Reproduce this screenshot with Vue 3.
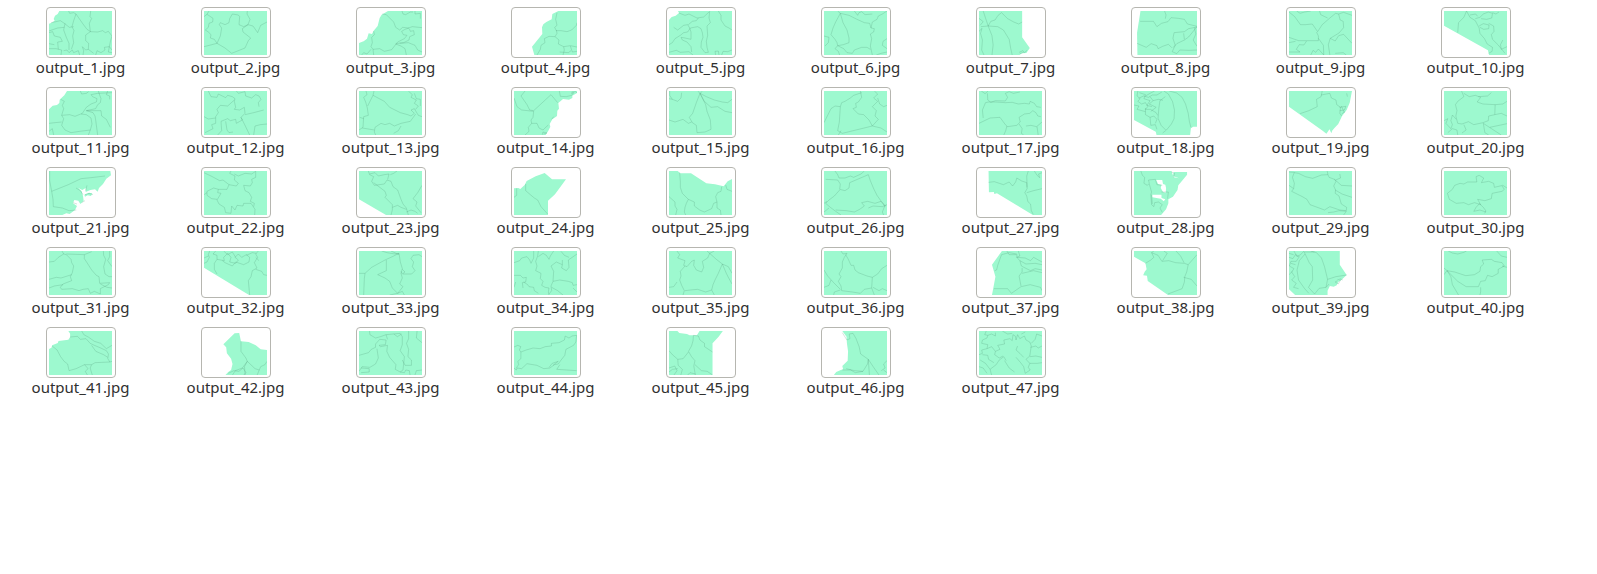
<script setup>
// Each sheet: [origin x, origin y, width, land outline ('' = the whole sheet), borders]
const sheets = [
  [144, 33, 189, 'M175 33L170 42 162 47 158 57 161 62 152 68 144 71V165H333V33Z', 'M203 33L206 40 218 38 225 42 246 72 258 88 269 95M225 42L218 62 213 80 219 92 215 108 218 128 211 148M269 33L267 50 272 55 265 70 268 95 254 105 254 122 263 130 262 148 278 160M268 95L290 96 305 92 313 98 322 94 333 108 328 125 325 140M150 68L165 65 178 62 190 70 205 82 218 80M192 70L188 90 196 112 204 130 204 150M144 93L158 88 170 84 190 82M144 98L155 95 160 108 178 112 184 124 170 126 172 148M144 131L160 134M144 146L165 146 182 150 180 165M188 152L198 150 204 158 214 150 218 158 232 152 236 165M246 165L248 152 244 140 254 150 262 148M284 165L288 152 300 158 312 150 310 142 325 140 333 150M325 140L322 156 333 158'],
  [609, 33, 189, '', 'M624 33L618 43 609 50M618 43L636 55 635 66 624 70 622 82 613 90 622 96 630 104 628 114 640 118 648 130 609 140M648 130L658 108 662 84 655 74 658 68 672 74 684 68 686 56 694 42 712 45 716 50 714 74 728 80 741 74M739 33L738 42 747 58 741 74 756 78 770 98 779 76 798 66M741 74L724 86 726 96 749 114 742 122 732 144 692 160 672 144 648 130'],
  [1074, 33, 189, 'M1161 33L1142 44 1136 54 1130 78 1118 92 1113 102 1103 100 1098 116 1088 124 1074 129V165H1263V33Z', 'M1144 42L1156 44 1178 66 1184 82 1196 90 1205 82 1222 84 1234 80 1263 83M1203 33L1206 42 1214 44 1228 36 1236 36M1242 33L1242 42 1258 40 1258 56M1118 93L1120 104 1112 112 1114 128 1110 140 1116 148 1136 146 1150 154 1172 149 1190 126 1210 116 1218 106 1207 104 1202 94 1212 88 1224 84M1225 86L1228 94 1238 92 1240 104 1226 110 1224 120 1208 128 1196 129 1184 132 1200 138 1212 146 1216 165M1196 130L1222 128 1242 136 1250 150 1263 156M1082 165L1088 158 1098 162 1110 148M1116 148L1118 165'],
  [99, 33, 189, 'M232 33L214 42 212 58 196 66 187 73 183 82 184 102 153 140 160 165H288V33Z', 'M228 38L224 58 228 76 221 82 226 92 240 92 258 95 272 90 286 76 288 68M226 90L228 100 222 110 204 109 190 116 192 128 180 136 178 148 168 165M222 110L234 120 232 132 248 140 268 137 288 141M248 140L250 150 246 165M268 138L274 156 288 154M236 156L262 158 270 152'],
  [564, 33, 189, 'M591 33L594 39 584 47 572 51 564 60V165H753V33Z', 'M594 39L612 46 624 42 648 54 668 51 684 36M712 33L720 46 720 60 732 78 744 84 753 90M686 33L684 54 688 68 678 78 680 106 676 124 678 142 682 157 672 158 660 142 661 126 666 112 664 98 660 86 650 80 628 84 620 96 608 98 598 106 582 116 574 128 564 134M578 82L590 90 608 76 620 74 626 84 630 96 630 118 612 114 600 112 604 120 618 126 630 140 632 156M622 74L634 64 646 62 652 54M564 157L586 151 598 157 624 155 636 165M704 165L702 154 712 153 714 165M722 165L726 154 740 155 753 150'],
  [1029, 33, 189, '', 'M1070 33L1078 40 1104 46 1128 58 1150 68 1166 70 1170 84M1078 40L1064 66 1056 84 1050 104 1062 118 1068 128 1070 137 1087 134 1104 128 1104 114 1098 90 1086 68 1078 40M1218 33L1204 42 1192 48 1188 58 1174 66 1170 84 1180 86 1178 96 1168 102 1172 116 1168 138 1174 165M1120 33L1130 46 1134 38 1142 35 1152 44 1174 42M1029 108L1044 112 1042 128 1032 138M1070 137L1062 146 1072 154 1076 165M1070 137L1088 146 1098 158 1114 160 1120 150 1142 142 1158 142 1168 148M1218 116L1206 124 1204 136 1218 146M1186 165L1200 160 1218 156'],
  [73, 33, 165, 'M73 33H186V112L206 144 197 159 186 160 179 165H73Z', 'M84 33L97 78 107 107 110 135 107 165M97 78L104 64 115 60 123 46 132 38 148 56 164 66 177 72 186 66M78 80L97 78 122 80 137 90 152 118 156 145 160 165M73 94L81 85 77 100 82 120 80 150 86 165M178 157L188 152 192 158 199 151M180 161L190 157M73 55L84 65 76 76'],
  [478, 33, 165, 'M495 33H643V165H487L486 98Z', 'M494 64H529L538 80 550 70 567 65 575 53 594 55 610 58 618 72 643 79M558 33L562 45 560 56M486 130L510 142 523 131 538 137 541 146 553 139 568 133 577 143M643 81L621 86 610 95 583 98 580 115 586 136 578 155 590 161 598 150 621 151 643 150M643 80L621 111 610 120 590 131 580 143M608 100L610 118M636 83L640 102 633 120 643 139'],
  [883, 33, 165, '', 'M883 36L898 50 913 74 926 74 944 72 958 95 970 74 990 54 1005 40 1013 42 1017 60 1025 64 1026 83 1014 99 991 115 1004 123 1013 107 1026 103 1048 130M903 33L912 40 924 36 940 33M883 112L908 122 960 122 960 108 955 96M963 33L966 44 984 54M883 128L900 124M929 123L922 135 910 134 902 148 912 156 883 156M960 115L973 136 974 165M991 115L986 134 990 165M940 165L946 151 953 157 960 147 974 165M1004 160L1025 158 1033 165M1013 42L1026 37 1048 46'],
  [1288, 33, 165, 'M1288 33H1453V165H1406L1403 151 1288 77Z', 'M1347 33L1340 52 1326 68 1324 98M1347 33L1356 52 1370 62 1380 84 1382 100 1394 116 1401 132 1415 142 1414 154 1405 160M1370 56L1382 52 1391 42 1404 36 1415 40 1413 54 1400 58 1385 56M1356 45L1371 42 1376 49M1380 78L1391 71 1406 75 1405 86 1392 88 1382 82M1405 70L1418 78 1419 94 1412 104 1415 118 1430 135 1448 160M1442 120L1436 134 1438 148 1453 140M1415 38L1424 42 1432 36'],
  [144, 273, 189, 'M198 273L190 286 182 293 176 299 175 309 168 315 155 317 144 328V405H333V273Z', 'M179 298L190 304 184 316 188 326 182 346 206 344 222 349 244 340 256 322 270 312 286 306 288 296 275 290 270 284 290 280 333 278M238 273L242 282 256 280 263 275M292 273L296 285 300 296 298 308 290 314 284 326 256 332 276 338 282 348 284 360 290 405M256 332L300 332 302 348 316 358 328 382M182 346L188 356 182 376 192 390 210 398 236 394 268 390 273 372 270 354 256 344 240 342M144 370L162 368 182 366M144 394L154 386 158 405M268 390L262 405M320 273L316 284 326 288 326 298'],
  [609, 273, 189, '', 'M622 273L630 290 648 292 652 282 674 293 680 286 694 290 702 296 700 304 704 322 700 328M700 300L680 318 658 316 648 328 652 338 644 350 644 370 632 374 636 386 612 398M609 350L622 357 644 354M706 273L712 280 732 275 734 288 752 294 764 284 774 288 780 298 772 308 774 320M700 328L716 330 730 322 732 340 720 352 724 360 706 370 704 358 688 362 680 356 660 364 662 392 650 405M720 352L732 376 746 405M732 344L758 338 788 330M758 405L762 378 778 374 798 372M674 364L678 390 684 398 696 396'],
  [1074, 273, 189, '', 'M1095 273L1098 284 1088 292 1094 306 1099 324 1102 346 1088 350 1086 382 1074 390M1119 273L1116 286 1150 304 1166 322 1198 338 1220 344 1230 348 1240 340 1230 330 1240 326 1252 346 1263 350M1116 286L1100 318M1084 384L1120 390M1088 356L1076 352M1222 273L1234 284 1230 292 1246 300 1240 310 1252 318 1244 328M1240 280L1246 296 1258 298 1258 318M1244 342L1228 364 1200 370 1180 378 1166 370 1152 374 1140 370 1122 382 1120 396 1124 405M1200 378L1192 392 1178 400'],
  [99, 273, 189, 'M99 273H288V279L274 287 274 294 264 299 246 297 232 309 234 326 229 332 228 348 214 358 206 372 208 380 202 392 194 405H99Z', 'M132 273L120 288 138 314 146 330 158 332 210 284 230 308M235 273L238 289 256 290 272 286 278 278 270 280M272 276L284 275 288 279M99 294L108 320 122 330 158 334 156 352 150 360 152 370 142 382 144 394 132 405M152 370L168 370 174 384 186 390 194 382 202 375M184 404L186 396 198 399 188 402M212 358L218 350'],
  [564, 273, 189, '', 'M566 273L566 286 574 298 590 304 600 294 602 278M564 296L574 298M657 280L646 308 635 340 625 352 634 368 646 376 648 398 672 396 690 388 688 360 678 334 674 314 657 280 670 304 690 322 710 320 732 334 753 338M657 280L676 290 700 300 724 306 740 308 753 298M657 280L650 273M657 280L664 274M564 360L582 366 606 358 622 370 632 366'],
  [1029, 273, 189, '', 'M1029 368L1038 350 1050 326 1062 318 1078 320 1082 308 1092 304 1108 294 1118 286 1142 278M1138 273L1142 292 1132 306 1124 310 1126 322 1116 326 1132 342 1148 344 1164 360 1174 378 1192 358 1182 348 1186 332 1174 320 1190 304 1178 294 1190 282 1180 273M1078 320L1075 366 1070 392 1084 400 1174 378 1200 384 1218 396M1190 294L1196 312 1208 320 1218 316M1080 392L1072 405'],
  [73, 273, 165, '', 'M79 273L89 281 97 273M95 280L96 300 104 307 116 302 142 303 148 292 142 280 152 275 163 280 180 276M90 308L98 306 116 306 142 308 160 307 176 312 192 310 205 312 207 304 218 310 224 320 235 322M90 308L82 330 84 354M73 370L102 354 128 352 142 374 148 380 172 376 181 366 178 352 192 342 206 340 214 332 222 338 227 348 235 350M146 378L143 392 138 405M178 372L186 386 184 400 190 405M196 378L209 376 224 380 238 366M225 380L228 405'],
  [478, 273, 165, 'M478 273H643V380H633L627 385 625 405H537L535 395 478 360Z', 'M488 273L486 288 494 296 488 304 498 312 508 308 514 320 508 328 521 328 536 338 540 346M490 295L503 288 516 292 526 285 538 285 551 276M492 278L508 284 504 296 520 302 512 316 525 320M508 288L520 280 532 273M520 290L528 302 542 298 554 301M528 302L518 312 536 322 522 334M556 273L568 282 579 305 584 330 583 356 576 372 563 390 553 399M560 290L546 302 543 325 541 355 549 376 561 390M570 273L590 279 604 292 613 312 620 340 623 364 627 382M508 324L508 344 520 352 522 376 534 374 538 388M520 352L530 348 538 358 534 370M478 315L491 318 486 328 508 335'],
  [883, 273, 165, 'M883 273H1048L1042 308 1034 330 1022 348 1012 372 1002 384 996 392 994 400 989 388 981 401 971 392 883 320Z', 'M912 341L935 332 957 320 955 298 967 290 970 273M967 285L990 280 994 294 1006 300 1008 314 1018 322 1016 340 1021 348M1015 322L1032 319 1028 330 1016 332M1020 318L1028 338M1034 280L1036 290M1021 342L1029 335'],
  [1288, 273, 165, '', 'M1334 273L1340 290 1324 304 1318 314 1322 332 1319 348 1324 370 1335 372 1352 365 1366 374 1390 368 1404 362 1405 348 1421 344 1422 314 1390 312 1375 306 1384 292 1370 286 1354 290 1340 280M1378 290L1402 288 1412 278M1422 314L1442 312 1453 304M1421 344L1438 340 1453 348M1288 362L1298 356 1293 370 1306 386 1310 374 1306 362 1310 345 1320 358M1391 370L1415 388 1438 405M1391 370L1395 398 1405 405M1340 374L1346 390 1335 399M1408 382L1453 371M1298 398L1310 386 1322 390 1324 405'],

  [144, 33, 189, 'M144 33H328L330 46 316 56 306 72 294 84 290 95 282 88 268 90 254 96 254 84 244 90 232 84 242 94 246 108 248 122 238 132 232 122 220 120 216 130 228 138 222 150 206 162 196 160 184 165H144ZM250 104L264 98 274 100 270 108 260 106 252 110Z', 'M146 33L146 62 152 94 156 118 157 140 184 144 204 152 226 150M152 94L172 86 202 74 240 56 270 53 312 48M225 84L238 92 246 104M254 92L258 76M216 128L228 132M242 128L252 122M252 104L264 100 276 104'],
  [609, 33, 189, '', 'M609 38L634 50 656 62 666 60 684 74 706 78 712 70 700 60 702 48 686 40 690 33M700 42L712 48 732 40 752 42 764 34 764 52 752 58 754 68 748 78 728 76 732 92 744 98 752 112 748 124 760 130 758 140M684 74L678 88 652 88 650 98 660 100 648 120 654 132 670 142 674 158 690 160 692 138 702 150 708 136 726 138 728 130 750 130 762 148 761 165M652 88L638 84 618 94 618 106 632 116 648 118M609 104L618 98'],
  [1074, 33, 189, 'M1074 33H1263V165H1155L1074 118Z', 'M1102 33L1106 44 1118 50 1112 64 1120 76 1150 72 1158 60 1170 64 1176 80 1190 90 1200 118 1206 132 1216 144 1222 165M1106 42L1122 38 1132 48 1150 44 1164 42 1160 58M1118 68L1152 94 1156 106 1152 112 1174 134 1174 150 1170 165M1174 142L1190 136 1200 142 1216 148M1216 156L1230 150 1242 154 1250 160M1263 76L1250 98 1236 116 1248 126 1244 138 1260 158M1168 44L1178 40 1188 33'],
  [99, 33, 189, 'M99 85L112 84 118 87 131 75 137 63 164 49 191 39 213 58H255L222 103 201 122V165H99Z', 'M134 72L134 92 148 104 160 114 170 120 180 140 200 162M107 85L107 106 99 112'],
  [564, 33, 189, 'M564 33H590L598 40H630L676 70 702 73 728 79 740 64 753 57V165H564Z', 'M596 38L598 64 598 82 604 100 622 118 616 130 612 142 610 156 614 165M564 110L582 126 582 138 588 148 584 165M622 118L640 126 640 138 656 150 670 156 692 146 698 130 708 126 704 110 710 98 720 94 722 80M734 75L738 88 753 94M708 126L708 144 718 150 720 165'],
  [1029, 33, 189, '', 'M1062 33L1070 44 1074 54 1092 54 1108 48 1118 52 1140 42 1150 33M1034 58L1070 60 1078 72 1076 88 1092 92 1104 84 1106 68 1162 44 1168 62 1178 86 1188 106 1212 140M1076 90L1060 108 1044 120 1034 130 1048 142 1064 154 1080 165M1029 130L1038 124M1064 150L1096 152 1120 156 1136 148 1150 138 1142 128 1160 124 1182 130 1200 124 1214 138M1162 144L1176 138 1204 140 1218 134M1212 136L1204 156 1208 165M1029 156L1044 144'],
  [73, 33, 165, 'M98 33H238V165H214L120 100 113 102 112 96 99 97Z', 'M98 67L113 65 137 74 152 66 161 78 169 66 172 54 185 63 198 68 199 86 193 98 198 108 201 125 208 132 210 152 215 163M202 33L198 48 199 82M198 98L216 92 238 86M218 33L225 46 232 53 229 42 238 38'],
  [478, 33, 165, 'M478 33H576L578 40 582 52 596 55 580 48 582 36H617V44L604 62 594 76 592 90 580 110 568 118 568 130 562 148 549 165H478ZM536 60L541 72 550 74 548 84 554 96 561 98 562 84 560 74 554 72 552 60ZM526 104H550V114L560 118 556 124 548 116 526 112Z', 'M496 33L500 46 506 52 504 70 513 76 518 70 516 60 534 58 538 74 552 76M518 72L524 96 522 104 524 134 530 140 532 128 542 126 552 134 546 144 552 157M550 96L568 96 566 116M576 36L584 40 582 52M524 104L526 132'],
  [883, 33, 165, '', 'M883 36L897 37 892 52 897 70 895 86 890 94 918 110 930 118 938 134 962 144 976 150 990 140 1016 150 1033 152 1034 142 1020 132 1014 108 1004 100 1005 90 1000 78 1006 64 1002 58 988 52 985 44 968 45 945 55 926 50 908 40 897 38M895 86L883 76M1005 60L1018 54 1016 42M1002 58L1008 64 1020 76 1048 78M1004 90L1022 102 1048 112M985 44L983 33M985 158L1000 156 1014 152 1033 154 1026 165'],
  [1288, 33, 165, '', 'M1297 100L1310 88 1316 76 1330 70 1340 72 1350 66 1374 66 1372 50 1380 46 1392 54 1386 68 1405 64 1418 70 1420 82 1442 76 1453 84M1297 100L1302 118 1320 130 1340 128 1352 134 1368 128 1384 134 1376 118 1395 122 1412 116 1414 100 1440 94 1446 88 1440 78M1380 132L1372 142 1366 154 1382 150 1398 156M1380 130L1391 142 1398 153 1394 160'],
  [144, 273, 189, '', 'M183 273L188 282 196 284 210 298 212 308 218 318 214 338 208 350 212 362 186 372 178 382 182 388 214 386 234 392 246 388 262 386 268 400 280 394 298 402 298 386 322 374 326 368 296 370 294 350 286 346 272 330 258 308 250 296 250 284 196 282M250 284L272 275M188 282L172 292 160 304 144 306M212 344L180 354 166 352 144 358M186 374L160 378 144 384M307 273L308 286 314 298 308 320 312 342 324 350 333 350M326 273L326 290 320 302 333 320M298 372L318 382 333 384'],
  [609, 273, 189, 'M609 273H798V405H744L609 323Z', 'M626 273L622 284 625 292 618 306 609 310M644 273L636 282 648 286 648 298 640 310 640 328 648 342M648 298L670 302 668 292 680 280 690 292 686 306 704 310 712 300 702 292 712 282 722 292 736 284 746 292 744 306 728 314 704 306 694 318 672 308 664 302M668 273L680 284 694 276 704 292M772 273L764 282 770 292 760 308 768 324 754 332 750 350 742 362 746 405M736 286L754 278 766 280M764 328L782 334 788 344 798 346M764 292L774 302M609 294L622 288'],
  [1074, 273, 189, '', 'M1142 273L1158 278 1182 282 1194 280 1174 290 1152 300 1112 322 1092 340 1090 356 1088 405M1074 340L1092 340M1194 280L1198 306 1204 326 1200 340 1204 354 1196 372 1206 380 1190 400 1174 384 1166 364 1152 354 1130 344 1156 332 1156 300M1170 273L1194 284M1204 328L1212 336 1204 342 1200 334M1206 342L1232 342 1242 332 1234 320 1238 306 1230 296 1236 286 1254 284 1263 290M1190 400L1166 405M1190 400L1204 394 1210 405'],
  [99, 273, 189, '', 'M158 273L158 294 150 310 146 300 138 290 122 294 116 302 99 308M172 273L170 288 164 304 168 318 164 332 180 340 178 356 186 364 182 376 192 382 204 384 202 396 204 405M172 290L186 280 196 286 204 298 208 288M218 273L208 288M244 300L244 314 226 306 218 312 210 318 218 334 216 364 210 378 212 392 204 402M244 314L242 324 256 332 264 322 262 300 288 282M216 364L236 360 262 364 274 368 276 376 288 374M99 346L118 346 126 354 136 352 134 366 124 368 126 384M128 366L140 374 144 380 158 382 160 392 172 400M212 382L230 392 246 405M288 396L276 384M99 382L104 366M264 292L250 286 240 274'],
  [564, 273, 189, '', 'M588 273L596 284 590 294 612 302 608 316 618 320 632 304 640 300 638 316 646 330 662 336 668 322 664 304 680 294 686 280 706 298 724 312 742 320 753 340M686 280L678 273M686 280L700 273M612 318L598 334 600 348 596 360 602 376 610 392 606 405M724 312L712 340 702 360 696 374 692 390 674 396 650 388 628 390 612 392M724 312L736 340 742 352 753 372M692 390L700 405M564 382L578 380 588 366'],
  [1029, 273, 189, '', 'M1080 273L1086 282 1098 280 1090 292 1084 306 1084 324 1074 342 1080 350 1072 364 1080 378 1082 392 1114 396 1138 400 1150 388 1172 384 1174 352 1158 348 1132 338 1122 330 1118 316 1110 316 1102 298 1094 284M1174 352L1190 342 1202 326 1218 316M1029 330L1040 348 1058 368 1078 388M1029 382L1044 376 1050 360M1078 390L1060 396 1058 405M1172 384L1180 405M1176 382L1194 392 1204 386 1218 392'],
  [73, 273, 165, 'M133 273H238V405H107L116 350 107 314Z', 'M122 316L119 330 114 332M122 316L132 284 152 278 172 282 172 292 180 302 184 318 194 324 208 332 220 326 238 330M146 273L152 284 170 284M176 273L180 288 172 292 194 294 208 302 216 292 238 306M180 302L196 312 220 310 238 314M186 324L186 336 178 348 183 378M186 340L216 332 238 338M112 386H148L158 400 183 380 207 374 234 382 238 392'],
  [478, 273, 165, 'M478 273H643V405H567L514 363 512 347 502 346 506 335 511 328 508 310 478 290Z', 'M508 310L522 300 530 292 524 278 530 273M524 278L541 286 551 304 569 302 587 308 610 310 620 314 643 284M556 273L565 280 553 302M588 273L600 288 609 308M620 314L616 336 611 350 610 366 604 386 567 402M608 352L628 358 643 378'],
  [883, 273, 165, 'M883 273H1016V314L1034 345 1020 360 1012 366 1008 376 1000 380 990 378 984 392 984 405H899L883 388Z', 'M896 273L904 290 913 284 922 274 936 308 944 320 945 360 934 382 950 402M925 282L910 302 904 330 908 360 924 386 935 400M940 273L955 278 968 294 976 320 984 358 980 382 962 385 950 402M924 276L950 276M883 292L893 296 900 284 910 290 902 304 888 304 884 318 896 326 890 336 898 350 890 360 902 370 895 382 908 386M883 344L892 334M984 358L1006 350 1034 345M980 382L988 372M1010 358L1018 360 1012 372 1004 366 1010 362M1016 356L1024 360M883 280L895 284M888 310L900 314'],
  [1288, 273, 165, '', 'M1299 273L1310 279 1324 282 1340 277 1347 273M1426 273L1438 288 1453 292M1296 332L1316 336 1345 347 1368 344 1382 334 1384 320 1392 312 1388 300 1412 298 1420 304 1440 308 1446 318 1430 328 1430 340 1414 350 1402 346 1396 362 1384 364 1378 380 1346 380 1324 364 1296 332 1306 350 1310 374 1326 405M1288 344L1296 332 1288 324M1384 382L1384 396 1382 405M1440 318L1453 322'],

  [137, 33, 179, 'M192 33H316V165H137V87L144 83 146 76 162 69 164 63 192 59 197 51 197 41Z', 'M197 51L218 49 226 58 242 56 254 70 266 76 284 84 300 92 306 102 304 116 310 126 268 128 258 134 238 134 214 146 194 152 190 132 180 124 170 110 160 90 146 78M230 33L236 44 250 52 266 64 284 70 300 86 316 76M304 112L292 104 270 94 258 76M238 134L248 146 240 154 246 165M258 134L254 144 260 165M310 126L316 124'],
  [579, 33, 179, 'M666 40L679 39 684 64 706 66 726 76 740 88 758 90V165H640L648 156 656 150 660 132 656 116 644 100 642 82 634 73Z', 'M684 64L684 94 698 114 702 124 688 144 668 152 660 165M702 124L724 146 736 150 740 140 752 134 758 124M648 160L664 152 678 154 690 144 698 158 692 165M702 124L694 140 696 165M736 150L730 165'],
  [1021, 33, 179, '', 'M1051 33L1052 44 1068 54 1082 50 1098 44 1138 40 1144 50 1144 74 1138 92 1150 110 1148 130 1146 150 1138 156 1124 148 1126 134 1108 112 1100 94 1102 76 1082 80 1078 76 1096 74 1098 60 1080 58 1068 72 1068 82 1056 88 1048 98 1021 106M1098 44L1102 58M1072 86L1076 114 1068 132 1052 142 1030 140 1021 154M1162 33L1162 56 1156 70 1162 88 1160 110 1170 120 1170 136 1152 136 1144 120M1120 42L1130 50 1142 42M1186 33L1184 54 1200 68M1027 144L1050 146 1050 156 1027 158M1138 156L1150 158 1154 150 1164 152 1166 165M1180 165L1184 152 1200 150'],
  [86, 33, 165, '', 'M86 81L96 76 104 80 100 90 104 96 118 90 136 84 154 86 168 80 184 78 184 70 204 68 218 60 220 48 230 54 238 48 250 46 248 66 242 76 222 88 219 106 208 122 202 132 192 134 180 144 164 146 146 136 120 131 106 146 94 144 92 150 86 144M104 96L104 116 96 124 98 134 92 144M206 134L198 148 250 152M178 142L186 130 202 124 188 136'],
  [491, 33, 165, 'M491 33H513L518 39 538 42 545 46H564L571 33H632L621 50 605 70V165H491Z', 'M555 46L554 62 550 78 542 94 550 110 559 122 556 138 560 165M555 46L568 48 572 60 584 70 584 80 605 96M491 92L500 104 514 118 528 116 542 96M514 118L515 136 526 148 522 165M491 144L506 138 512 152 504 165M491 156L500 148 514 146M559 134L576 152 591 154 605 165M540 165L546 158 560 162'],
  [896, 33, 165, 'M944 33H1061V165H922L928 156 940 150 946 148 944 138 958 122 959 94 956 70 955 50Z', 'M944 38L956 60 964 56 962 42 972 40 980 56 988 80 992 102 1012 118 1010 132 998 154 976 152 954 146M1012 118L1026 142 1040 165M1012 118L1015 165M944 150L966 150 978 158 998 154M1061 122L1052 132 1056 144 1046 152M1061 158L1052 150'],
  [1301, 33, 165, '', 'M1320 33L1316 44 1324 46 1322 54 1310 60 1308 70 1324 74 1322 86 1308 90 1310 100 1301 104M1324 46L1334 42 1344 48 1344 38M1322 86L1334 80 1344 94 1356 88 1350 76 1368 72 1366 60 1382 56 1388 62 1390 44 1396 48 1398 60 1402 44 1408 56 1420 48 1424 60 1434 66 1438 78 1436 92 1434 108 1424 118 1434 130 1430 142 1435 150 1422 160 1418 140 1410 128 1398 112M1372 122L1366 110 1354 120 1346 134 1330 148 1318 130 1304 120M1344 94L1342 104 1354 114 1364 108M1310 104L1324 106 1326 118 1340 128M1402 78L1398 90 1408 100 1418 112M1436 82L1450 78 1456 84 1466 78M1438 70L1448 58 1452 42 1466 48M1434 110L1450 108 1466 112M1434 130L1454 130 1466 128M1330 148L1334 165M1368 122L1380 144 1394 156M1301 140L1312 144 1322 160M1362 33L1376 42 1388 40M1412 42L1422 36']
]

const files = sheets.map(([x, y, w, land, borders], i) => ({
  name: `output_${i + 1}.jpg`,
  box: `${x} ${y} ${w} 132`,
  land: land || `M${x} ${y}h${w}v132h-${w}Z`,
  borders
}))
</script>

<template>
  <main class="folder">
    <ul class="files">
      <li v-for="file in files" :key="file.name">
        <figure class="file">
          <span class="frame">
            <svg class="map" :viewBox="file.box" preserveAspectRatio="none" aria-hidden="true">
              <path class="land" :d="file.land" />
              <path class="border" :d="file.borders" />
            </svg>
          </span>
          <figcaption class="name">{{ file.name }}</figcaption>
        </figure>
      </li>
    </ul>
  </main>
</template>

<style>
body {
  margin: 0;
  background: #fff;
}
</style>

<style scoped>
.folder {
  padding: 7px 3px;
  font-family: "Noto Sans", "Open Sans", sans-serif;
}
.files {
  display: grid;
  grid-template-columns: repeat(auto-fill, 155px);
  row-gap: 11px;
  margin: 0;
  padding: 0;
  list-style: none;
}
.file {
  display: flex;
  flex-direction: column;
  align-items: center;
  margin: 0;
}
.frame {
  display: block;
  padding: 3px 3px 2px 2px;
  border: 1px solid #b6b6b0;
  border-radius: 4px;
  background: #fff;
}
.map {
  display: block;
  width: 63px;
  height: 44px;
}
.land {
  fill: #9df9cf;
  fill-rule: evenodd;
}
.border {
  fill: none;
  stroke: #3a7d60;
  stroke-opacity: 0.2;
  stroke-width: 1px;
  stroke-linejoin: round;
  vector-effect: non-scaling-stroke;
}
.name {
  color: #303030;
  font-size: 15px;
  line-height: 18px;
}
</style>
